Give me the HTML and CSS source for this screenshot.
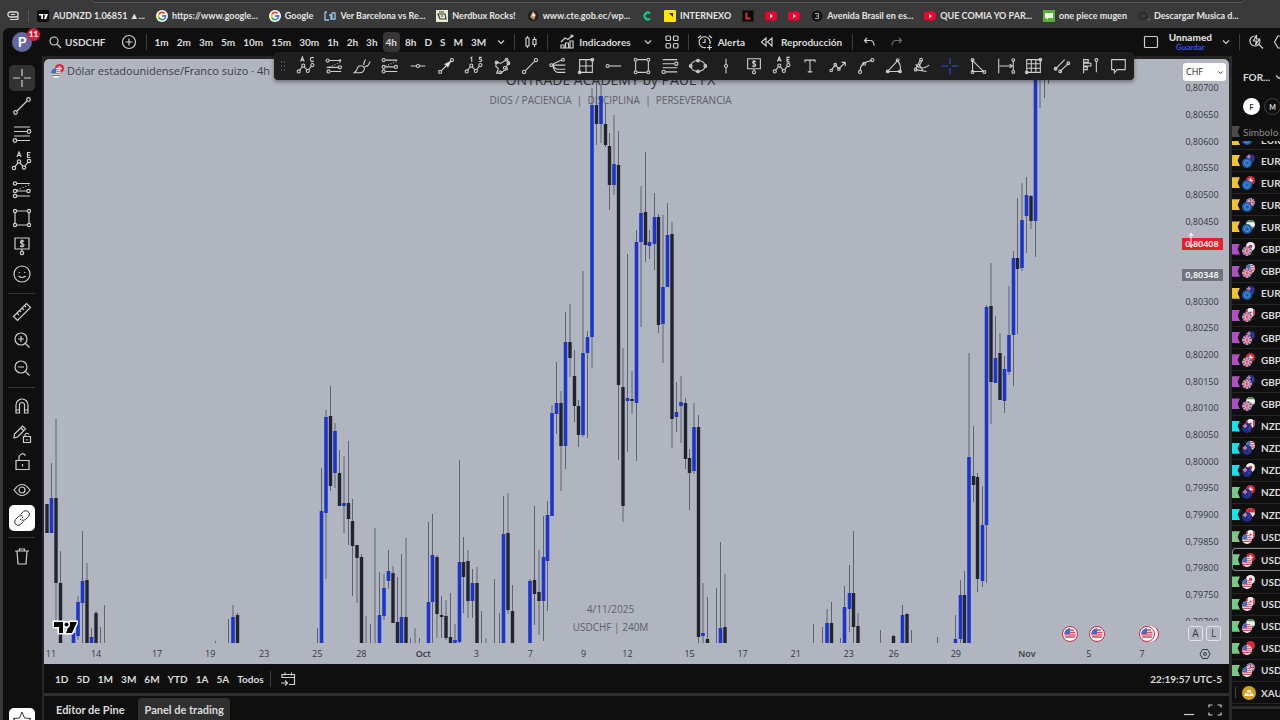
FILE: index.html
```html
<!DOCTYPE html>
<html lang="es">
<head>
<meta charset="utf-8">
<title>USDCHF</title>
<link rel="stylesheet" href="styles.css">
</head>
<body>
<svg class="defs" aria-hidden="true">
  <defs>
    <symbol id="cross" viewBox="0 0 22 22"><path d="M11 2v7M11 13v7M2 11h7M13 11h7"/></symbol>
    <symbol id="trend" viewBox="0 0 22 22"><circle cx="4.500" cy="17.500" r="1.800"/><circle cx="17.500" cy="4.500" r="1.800"/><path d="M6 16 16 6"/></symbol>
    <symbol id="fib" viewBox="0 0 22 22"><path d="M3 4h16M3 8.500h13M3 13h16M6 17.500h13"/><circle cx="18" cy="8.500" r="1.800"/><circle cx="4" cy="17.500" r="1.800"/></symbol>
    <symbol id="zig" viewBox="0 0 22 22"><circle cx="3" cy="17" r="1.700"/><circle cx="8" cy="10.500" r="1.700"/><circle cx="13" cy="16.500" r="1.700"/><circle cx="18" cy="10" r="1.700"/><path d="m4 15.600 3-3.800M9 12l3 3.300M14 15l3-3.800"/></symbol>
    <symbol id="ae" viewBox="0 0 22 22"><use href="#zig"/><path d="m6 6 2-5 2 5M6.700 4.500h2.600M19.500 1.500h-3v5h3M16.500 4h2.500"/></symbol>
    <symbol id="ac" viewBox="0 0 22 22"><use href="#zig"/><path d="m5 6 2-5 2 5M5.700 4.500h2.600M19.500 2.500q-1-1.500-2.500-.8t-1 2.500 1.300 2 2.200-1"/></symbol>
    <symbol id="elliott" viewBox="0 0 22 22"><use href="#zig"/><path d="m7 2.500 1.500-1v5M19.500 1.500h-2.500v2q2.500-.5 2.500 1.200t-2.800 1.300"/></symbol>
    <symbol id="channel" viewBox="0 0 22 22"><circle cx="4" cy="5" r="1.700"/><path d="M6 5h13M3 12.500h13M7 17h12"/><circle cx="17.500" cy="12.500" r="1.700"/><circle cx="5" cy="17" r="1.700"/><circle cx="17.500" cy="5" r=".8"/><path stroke-dasharray="1 2" d="m6 12 12-5"/></symbol>
    <symbol id="channel2" viewBox="0 0 22 22"><circle cx="4" cy="4.500" r="1.700"/><circle cx="4" cy="12" r="1.700"/><circle cx="4" cy="17" r="1.700"/><circle cx="17.500" cy="12" r="1.700"/><path d="M6 4.500h13M6 12h9.800M6 17h13"/><path stroke-dasharray="1 2" d="m6 11 12-5"/></symbol>
    <symbol id="rect" viewBox="0 0 22 22"><path d="M6 4h10M6 18h10M4 6v10M18 6v10"/><circle cx="4" cy="4" r="1.600"/><circle cx="18" cy="4" r="1.600"/><circle cx="4" cy="18" r="1.600"/><circle cx="18" cy="18" r="1.600"/></symbol>
    <symbol id="price" viewBox="0 0 22 22"><path d="M4 3h14v11H4zM11 14v2M13 6.500q-1-1-2.200-.9t-1.300 1.400 1.700 1.500 1.800 1.600-1.600 1.500-2.400-1M11 4.500v8"/><circle cx="11" cy="18" r="1.700"/></symbol>
    <symbol id="smile" viewBox="0 0 22 22"><circle cx="11" cy="11" r="8"/><path d="M8.300 9v1M13.700 9v1M7.500 13q3.500 3 7 0"/></symbol>
    <symbol id="ruler" viewBox="0 0 22 22"><path d="M2.500 15.500 15.500 2.500l4 4-13 13zM6 12l2 2M8.500 9.500l1.500 1.500M11 7l2 2M13.500 4.500l1.500 1.500"/></symbol>
    <symbol id="zin" viewBox="0 0 22 22"><circle cx="10" cy="10" r="6"/><path d="m14.500 14.500 4 4M7 10h6M10 7v6"/></symbol>
    <symbol id="zout" viewBox="0 0 22 22"><circle cx="10" cy="10" r="6"/><path d="m14.500 14.500 4 4M7 10h6"/></symbol>
    <symbol id="magnet" viewBox="0 0 22 22"><path d="M5 18v-8a6 6 0 0 1 12 0v8h-3.500v-8a2.500 2.500 0 0 0-5 0v8zM5 15h3.500M13.500 15h3.500"/></symbol>
    <symbol id="penlock" viewBox="0 0 22 22"><path d="m3 15 .5-4 8-8 3 3-8 8zM10 5l3 3M12.500 13.500h7v6h-7zM14 13.500v-2q2-2.500 4 0M16 16v1.500"/></symbol>
    <symbol id="lock" viewBox="0 0 22 22"><path d="M5 9.500h13v9H5zM8 9.500v-4q3-5 6.500-1M11.500 13v2.500"/></symbol>
    <symbol id="eye" viewBox="0 0 22 22"><path d="M3 11q8-11 16 0-8 11-16 0z"/><circle cx="11" cy="11" r="3"/></symbol>
    <symbol id="link" viewBox="0 0 22 22"><path d="m9.500 7.500 3-3q2.500-2 4.800.2t.2 4.800l-3 3q-2 1.500-4 .5M12.500 14.500l-3 3q-2.500 2-4.800-.2t-.2-4.800l3-3q2-1.500 4-.5"/><path d="m9 13 4-4" stroke-dasharray="1.500 1.500"/></symbol>
    <symbol id="trash" viewBox="0 0 22 22"><path d="M4 6h14M8.500 6V4h5v2M6 6l1 13h8l1-13"/></symbol>
    <symbol id="star" viewBox="0 0 22 22"><path d="m11 2 2.500 6 6.500.5-5 4.200 1.500 6.300-5.500-3.400L5.500 19 7 12.700 2 8.500 8.500 8z"/></symbol>
    <symbol id="brush" viewBox="0 0 22 22"><path d="M2.500 18.500q3-2 3.500-5.500 1.500-3 5-2t2.500 4q-1 3-4.500 3.500zM13 10q0-4 2-6M14 11.500q3 0 4-1.500l2-4"/></symbol>
    <symbol id="hline" viewBox="0 0 22 22"><path d="M3 11h6M13 11h6"/><circle cx="11" cy="11" r="1.700"/></symbol>
    <symbol id="arrow" viewBox="0 0 22 22"><circle cx="4.500" cy="17.500" r="1.700"/><circle cx="17.500" cy="4.500" r="1.700"/><path d="m6 16 5-5"/><path class="fill" d="m10 9 6-3-3 6z"/></symbol>
    <symbol id="poly" viewBox="0 0 22 22"><path d="m5 7 5 1 6-4 3 3-3 4 1 4-4 1-3 3-5 0 2-5-3-3z"/><circle cx="5" cy="7" r="1.500"/><circle cx="16" cy="4" r="1.500"/><circle cx="18" cy="8" r="1.500"/><circle cx="14" cy="13" r="1.500"/><circle cx="9" cy="18" r="1.500"/></symbol>
    <symbol id="fan" viewBox="0 0 22 22"><path d="M5 9 15 4.500M5 10q2 8 6 8h8M5 10q3 4.500 6 4.500h8M5 10h14"/><circle cx="3.500" cy="10" r="1.500"/><circle cx="16.500" cy="4" r="1.500"/></symbol>
    <symbol id="gann" viewBox="0 0 22 22"><path d="M4 4h14v14H4zM11 4v14M4 11h14"/><circle cx="4" cy="18" r="1.500"/><circle cx="18" cy="4" r="1.500"/></symbol>
    <symbol id="ray" viewBox="0 0 22 22"><path d="M6 11h13"/><circle cx="4" cy="11" r="1.700"/></symbol>
    <symbol id="ellipse" viewBox="0 0 22 22"><ellipse cx="11" cy="11" rx="8" ry="6"/><circle cx="3" cy="11" r="1.500"/><circle cx="19" cy="11" r="1.500"/><circle cx="11" cy="5" r="1.500"/><circle cx="11" cy="17" r="1.500"/></symbol>
    <symbol id="vline" viewBox="0 0 22 22"><path d="M11 3v6M11 13v6"/><circle cx="11" cy="11" r="1.700"/></symbol>
    <symbol id="tee" viewBox="0 0 22 22"><path d="M5.500 7V4.500h11V7M11 4.500v13M8.500 17.500h5"/></symbol>
    <symbol id="path" viewBox="0 0 22 22"><path d="m4 15 4-5 4 4 7-7M15 7h4v4"/><circle cx="3.500" cy="16" r="1.400"/><circle cx="8" cy="9.500" r="1.400"/><circle cx="12" cy="14.500" r="1.400"/></symbol>
    <symbol id="curve" viewBox="0 0 22 22"><path d="M4.500 16q0-9 13-11"/><circle cx="4.500" cy="17.500" r="1.700"/><circle cx="9" cy="8.500" r="1.700"/><circle cx="18" cy="4.500" r="1.700"/></symbol>
    <symbol id="sector" viewBox="0 0 22 22"><path d="M4 17 15 5q4 5 3 12z"/><circle cx="4" cy="17" r="1.500"/><circle cx="15" cy="4.500" r="1.500"/><circle cx="17.500" cy="17" r="1.500"/></symbol>
    <symbol id="pitch" viewBox="0 0 22 22"><path d="m4 14 5-9M4 15l12 2M4 9q5 8 15 1M7 8l5 8M11 5l-4 8"/><circle cx="4" cy="15" r="1.500"/><circle cx="10" cy="4" r="1.500"/></symbol>
    <symbol id="tri" viewBox="0 0 22 22"><path d="M5 5v12h12z"/><circle cx="5" cy="4.500" r="1.600"/><circle cx="5" cy="17.500" r="1.600"/><circle cx="18" cy="17.500" r="1.600"/></symbol>
    <symbol id="range" viewBox="0 0 22 22"><path d="M3 3v16M19 6v10M4 11h14"/><path d="m15 9 3 2-3 2"/><circle cx="19" cy="4.500" r="1.500"/><circle cx="19" cy="17.500" r="1.500"/></symbol>
    <symbol id="grid" viewBox="0 0 22 22"><path d="M3 4h15v14H3zM3 8.500h15M3 13.500h15M8 4v14M13 4v14"/><circle cx="3" cy="18" r="1.500"/><circle cx="18" cy="4" r="1.500"/></symbol>
    <symbol id="parallel" viewBox="0 0 22 22"><path d="M3 15 14 4M9 17l9-9"/><circle cx="4" cy="14" r="1.500"/><circle cx="9" cy="17" r="1.500"/><circle cx="18" cy="8" r="1.500"/></symbol>
    <symbol id="profile" viewBox="0 0 22 22"><path d="M4 3v16M4 4h5v3H4M4 8h8v3H4M4 12h4v3H4M18 6v12"/><circle cx="18" cy="4.500" r="1.600"/></symbol>
    <symbol id="comment" viewBox="0 0 22 22"><path d="M4 4h15v11h-9l-3 3.500V15H4z"/></symbol>
    <symbol id="chev" viewBox="0 0 10 10"><path d="m2 3.500 3 3 3-3"/></symbol>
    <symbol id="flag-us" viewBox="0 0 12 12"><circle cx="6" cy="6" r="6" fill="#f3f3f6"/><path d="M1 9h10M.3 6.800h11.400M6 4.500h5.600M6 2h4" stroke="#d8475a" stroke-width="1.300"/><path d="M6 0v6H0a6 6 0 0 1 6-6z" fill="#3f6fc0"/></symbol>
    <symbol id="flag-eu" viewBox="0 0 12 12"><circle cx="6" cy="6" r="6" fill="#1d5fb4"/><circle cx="6" cy="6" r="3" fill="none" stroke="#7fb4c8" stroke-width=".8"/></symbol>
    <symbol id="flag-gb" viewBox="0 0 12 12"><circle cx="6" cy="6" r="6" fill="#5c5f9e"/><path d="m2 2 8 8M10 2 2 10" stroke="#e9b9c6" stroke-width="1.400"/><path d="M6 0v12M0 6h12" stroke="#f4dde2" stroke-width="2.600"/><path d="M6 0v12M0 6h12" stroke="#d5405a" stroke-width="1.400"/></symbol>
    <symbol id="flag-nz" viewBox="0 0 12 12"><circle cx="6" cy="6" r="6" fill="#20308a"/><path d="M1 3.500h5M4 1v5" stroke="#e8d5e0" stroke-width="1.600"/><path d="M1 3.500h5M4 1v5" stroke="#d8314f" stroke-width=".7"/><path d="M8 7h1M9 4h1" stroke="#e66" /></symbol>
    <symbol id="flag-ca" viewBox="0 0 12 12"><circle cx="6" cy="6" r="6" fill="#f6f0f1"/><path d="M2.500 1.200a6 6 0 0 0 0 9.600zM9.500 1.200a6 6 0 0 1 0 9.600z" fill="#d8273f"/><circle cx="6" cy="6" r="1.500" fill="#d8273f"/></symbol>
    <symbol id="flag-ch" viewBox="0 0 12 12"><circle cx="6" cy="6" r="6" fill="#d8273f"/><path d="M6 3v6M3 6h6" stroke="#fff" stroke-width="2"/></symbol>
    <symbol id="flag-jp" viewBox="0 0 12 12"><circle cx="6" cy="6" r="6" fill="#f6f0f1"/><circle cx="6" cy="6" r="2.400" fill="#d8273f"/></symbol>
    <symbol id="flag-hu" viewBox="0 0 12 12"><circle cx="6" cy="6" r="6" fill="#f0f3ee"/><path d="M.8 3a6 6 0 0 1 10.400 0z" fill="#4d8c5d"/><path d="M.8 9a6 6 0 0 0 10.400 0z" fill="#4d8c5d"/></symbol>
    <symbol id="flag-cn" viewBox="0 0 12 12"><circle cx="6" cy="6" r="6" fill="#d8273f"/></symbol>
    <symbol id="flag-sg" viewBox="0 0 12 12"><circle cx="6" cy="6" r="6" fill="#f6f0f1"/><path d="M0 6a6 6 0 0 1 12 0z" fill="#d8273f"/></symbol>
    <symbol id="gicon" viewBox="0 0 12 12"><circle cx="6" cy="6" r="6" fill="#fff"/><g fill="none" stroke-width="1.800"><path d="M8.600 3.300A3.600 3.600 0 0 0 3 4.200" stroke="#e94335"/><path d="M3 4.200a3.600 3.600 0 0 0 0 3.600" stroke="#fbbc05"/><path d="M3 7.800a3.600 3.600 0 0 0 5.300 1.100" stroke="#34a853"/><path d="M8.300 8.900A3.600 3.600 0 0 0 9.600 6H6" stroke="#4285f4"/></g></symbol>
    <symbol id="yt" viewBox="0 0 12 12"><rect y="1.500" width="12" height="9" rx="2.500" fill="#f00033"/><path d="m5 4 3 2-3 2z" fill="#fff"/></symbol>
  </defs>
</svg>

<nav class="bookmarks" aria-label="Marcadores">
  <div class="omnibox"></div>
  <svg class="fav" viewBox="0 0 12 12"><rect x="1" y="2" width="10" height="5" rx="2" fill="none" stroke="#ddd" stroke-width="1.300"/><path d="M3 9.500h8M11 7v2.500M4 4.500h4" stroke="#ddd" stroke-width="1.200"/></svg>
  <i class="bsep"></i>
  <a href="#"><svg class="fav" viewBox="0 0 12 12"><rect width="12" height="12" rx="2" fill="#0b0b0b"/><path d="M2 4h4v5H4.300V5.600H2zM8.500 4H11L9.200 9H7z" fill="#fff"/><circle cx="7.200" cy="4.800" r=".8" fill="#fff"/></svg>AUDNZD 1.06851 ▲...</a>
  <a href="#"><svg class="fav"><use href="#gicon"/></svg>https://www.google...</a>
  <a href="#"><svg class="fav"><use href="#gicon"/></svg>Google</a>
  <a href="#"><svg class="fav" viewBox="0 0 12 12"><path d="M1 2h2M1 2v8h4M5 5h2v5M8 2v8M9 3h2v6H9" fill="none" stroke="#9bc4ef" stroke-width="1.300"/></svg>Ver Barcelona vs Re...</a>
  <a href="#"><svg class="fav" viewBox="0 0 12 12"><rect width="12" height="12" fill="#e9ead2"/><path d="M2 4h7l1 5H4zM3 2h5M5 6h2" fill="none" stroke="#39402b" stroke-width="1.200"/></svg>Nerdbux Rocks!</a>
  <a href="#"><svg class="fav" viewBox="0 0 12 12"><circle cx="6" cy="6" r="5.500" fill="#25211e"/><path d="m6 1 3 4-2 5-4-3z" fill="#b89a70"/><circle cx="6.500" cy="5" r="1.500" fill="#ece6dd"/></svg>www.cte.gob.ec/wp...</a>
  <a href="#" aria-label="C"><svg class="fav" viewBox="0 0 12 12"><path d="M9 3.500a3.300 3.300 0 1 0 0 5" fill="none" stroke="#10c896" stroke-width="2.200"/></svg></a>
  <a href="#"><svg class="fav" viewBox="0 0 12 12"><rect width="12" height="12" rx="1" fill="#ffe600"/><path d="M5 3h4v4L7.500 5.500z" fill="#222"/></svg>INTERNEXO</a>
  <a href="#" aria-label="L"><svg class="fav" viewBox="0 0 12 12"><rect x=".5" y=".5" width="11" height="11" fill="#090909"/><path d="M4.500 2.500v6h4" fill="none" stroke="#e22a3d" stroke-width="2"/></svg></a>
  <a href="#" aria-label="YouTube"><svg class="fav"><use href="#yt"/></svg></a>
  <a href="#" aria-label="YouTube"><svg class="fav"><use href="#yt"/></svg></a>
  <a href="#"><svg class="fav" viewBox="0 0 12 12"><circle cx="6" cy="6" r="5.500" fill="#111"/><path d="M4 3.500h3.500v5H4M5 6h2" fill="none" stroke="#aaa"/></svg>Avenida Brasil en es...</a>
  <a href="#"><svg class="fav"><use href="#yt"/></svg>QUE COMIA YO PAR...</a>
  <a href="#"><svg class="fav" viewBox="0 0 12 12"><rect width="12" height="12" fill="#59ae3b"/><path d="M2 3h8v5H5v2L3 8H2z" fill="#e6f4dd"/></svg>one piece mugen</a>
  <a href="#"><svg class="fav" viewBox="0 0 12 12"><circle cx="5" cy="6" r="3.500" fill="none" stroke="#252525" stroke-width="1.500"/><path d="M11 9v1" stroke="#bbb"/></svg>Descargar Musica d...</a>
</nav>

<div class="app">
  <header class="topbar">
    <button class="avatar" aria-label="Perfil">P<span class="count">11</span></button>
    <button class="symbol"><svg class="ic s14" viewBox="0 0 14 14"><circle cx="6" cy="6" r="4"/><path d="m9 9 4 4"/></svg>USDCHF</button>
    <button class="plus" aria-label="Comparar"><svg class="ic s16" viewBox="0 0 16 16"><circle cx="8" cy="8" r="6.500"/><path d="M8 4.500v7M4.500 8h7"/></svg></button>
    <i class="sep"></i>
    <div class="frames">
      <button>1m</button><button>2m</button><button>3m</button><button>5m</button><button>10m</button><button>15m</button><button>30m</button><button>1h</button><button>2h</button><button>3h</button><button class="on">4h</button><button>8h</button><button>D</button><button>S</button><button>M</button><button>3M</button>
      <button class="more" aria-label="Más"><svg class="ic s10"><use href="#chev"/></svg></button>
    </div>
    <i class="sep"></i>
    <button class="candletype" aria-label="Velas"><svg class="ic s16" viewBox="0 0 16 16"><path d="M3 4h3v8H3zM4.500 2v2M4.500 12v2M10 5.500h3v5h-3zM11.500 3v2.500M11.500 10.500V13"/></svg></button>
    <i class="sep"></i>
    <button class="ind"><svg class="ic s16" viewBox="0 0 16 16"><path d="M2 14v-3h3v3zM6.500 14V9h3v5zM11 14V7h3v7zM2 14h12M2 8l4-4 3 1.500L13 2"/><circle cx="13" cy="2" r="1"/></svg>Indicadores</button>
    <button class="chevbtn" aria-label="Favoritos"><svg class="ic s10"><use href="#chev"/></svg></button>
    <button aria-label="Plantillas"><svg class="ic s16" viewBox="0 0 16 16"><rect x="2" y="2" width="4.500" height="4.500" rx="1"/><rect x="9.500" y="2" width="4.500" height="4.500" rx="1"/><rect x="2" y="9.500" width="4.500" height="4.500" rx="1"/><rect x="9.500" y="9.500" width="4.500" height="4.500" rx="1"/></svg></button>
    <i class="sep"></i>
    <button class="alert"><svg class="ic s16" viewBox="0 0 16 16"><path d="M12.800 10A5.500 5.500 0 1 0 9 13.500M8 5v3.500H5.500M1 4l3-2.500M12 1.500 15 4M12.500 11v5M10 13.500h5"/></svg>Alerta</button>
    <button class="replay"><svg class="ic s16" viewBox="0 0 16 16"><path d="M7 4v8L2.500 8zM13 4v8L8.500 8z"/></svg>Reproducción</button>
    <i class="sep undosep"></i>
    <button class="undo" aria-label="Deshacer"><svg class="ic s12" viewBox="0 0 12 12"><path d="M4 2 1.500 4.500 4 7M2 4.500h5q4 0 4 5"/></svg></button>
    <button class="redo" aria-label="Rehacer"><svg class="ic s12" viewBox="0 0 12 12"><path d="m8 2 2.500 2.500L8 7M10 4.500H5q-4 0-4 5"/></svg></button>
    <span class="grow"></span>
    <button aria-label="Diseño"><svg class="ic s16" viewBox="0 0 16 16"><rect x="1.500" y="2.500" width="13" height="11" rx="1"/></svg></button>
    <button class="layout"><b>Unnamed</b><span>Guardar</span></button>
    <button class="chevbtn2" aria-label="Menú"><svg class="ic s10"><use href="#chev"/></svg></button>
    <i class="sep"></i>
    <button class="quick" aria-label="Búsqueda rápida"><svg class="ic s16" viewBox="0 0 16 16"><path d="M11.500 5a5 5 0 1 1-5-3M11 10.500l4 4M8.500 1 5.500 7h3l-1 4 4-6h-3z"/></svg></button>
    <button class="gear" aria-label="Ajustes"><svg class="ic s16" viewBox="0 0 16 16"><path d="m5 2-3.500 6L5 14h6l3.500-6L11 2z"/></svg></button>
  </header>

  <div class="work">
    <aside class="rail">
      <button class="sel" aria-label="Cruz"><svg class="ic"><use href="#cross"/></svg></button>
      <button aria-label="Tendencia"><svg class="ic"><use href="#trend"/></svg></button>
      <button aria-label="Fibonacci"><svg class="ic"><use href="#fib"/></svg></button>
      <button aria-label="Patrones"><svg class="ic"><use href="#ae"/></svg></button>
      <button aria-label="Previsión"><svg class="ic"><use href="#channel2"/></svg></button>
      <button aria-label="Formas"><svg class="ic"><use href="#rect"/></svg></button>
      <button aria-label="Anotación"><svg class="ic"><use href="#price"/></svg></button>
      <button aria-label="Iconos"><svg class="ic"><use href="#smile"/></svg></button>
      <hr>
      <button aria-label="Medir"><svg class="ic"><use href="#ruler"/></svg></button>
      <button aria-label="Acercar"><svg class="ic"><use href="#zin"/></svg></button>
      <button aria-label="Alejar"><svg class="ic"><use href="#zout"/></svg></button>
      <hr>
      <button aria-label="Imán"><svg class="ic"><use href="#magnet"/></svg></button>
      <button aria-label="Modo dibujo"><svg class="ic"><use href="#penlock"/></svg></button>
      <button aria-label="Bloquear"><svg class="ic"><use href="#lock"/></svg></button>
      <button aria-label="Ocultar"><svg class="ic"><use href="#eye"/></svg></button>
      <button class="white" aria-label="Sincronizar"><svg class="ic"><use href="#link"/></svg></button>
      <hr>
      <button aria-label="Eliminar"><svg class="ic"><use href="#trash"/></svg></button>
      <button class="white fav-tools" aria-label="Favoritos"><svg class="ic"><use href="#star"/></svg></button>
    </aside>

    <main class="center">
      <section class="chart">
        <div class="plot">
          <div class="marks">
            <p class="title">ONTRADE ACADEMY by PAUL FX</p>
            <p class="motto">DIOS / PACIENCIA &nbsp;|&nbsp; DISCIPLINA &nbsp;|&nbsp; PERSEVERANCIA</p>
            <p class="date">4/11/2025</p>
            <p class="pair">USDCHF | 240M</p>
          </div>
          <svg class="candles" viewBox="44 59 1133 584" preserveAspectRatio="none">
            <path class="wick" d="M51.500 463V533M56 419V620M60.500 551V643M78 596V640M82.500 531V643M87 563V643M91.500 628V643M96 611V643M100.500 627V643M104.500 605V643M215.500 641V643M228.500 619V643M233 605V643M237.500 613V643M317.500 628V643M321.500 468V643M326 410V579M330.500 386V491M335 423V488M339.500 450V506M344 456V533M348.500 441V545M352.500 499V596M357 545V603M361.500 554V643M366 616V643M370.500 624V643M375 528V643M379.500 572V643M384 574V620M388.500 550V589M393 566V623M397.500 577V643M401.500 554V643M406 538V643M410.500 638V643M415 628V643M419.500 638V643M428.500 522V643M432.500 514V643M437 555V638M441.500 596V638M446 600V640M450.500 593V643M455 624V643M459.500 460V643M463.500 537V613M468 550V618M472.500 569V618M477 567V643M481.500 611V643M486 638V643M494.500 579V643M499.500 613V643M503.500 496V643M508 493V614M512.500 585V643M530 579V643M534.500 506V625M539 550V635M543.500 516V641M547.500 501V611M552 405V516M556.500 362V434M561 391V491M565.500 312V469M570 304V377M574.500 350V422M578.500 400V447M583 271V437M587.500 331V438M592 88V368M596.500 82V145M601 84V143M605.500 103V147M609.500 133V210M614 115V195M618.500 131V460M623 348V522M627.500 254V452M632 371V414M636.500 230V461M641 186V327M645.500 152V262M649.500 230V259M654.500 193V270M658.500 214V333M663 215V363M667.500 203V287M672 222V448M676.500 382V432M681 376V443M685.500 398V469M689.500 449V510M694 403V474M698.500 415V643M703 583V643M707.500 597V643M716.500 588V643M720.500 542V643M725 574V643M813.500 624V643M822.500 627V643M827 609V643M831.500 602V643M840.500 638V643M844.500 586V643M849.500 565V632M853.500 531V643M858 613V643M880.500 630V643M893.500 635V643M902.500 605V643M907 613V643M911.500 630V643M937.500 637V643M955.500 615V643M960.500 580V643M964.500 571V643M969 353V643M973.500 426V502M977.500 473V592M982.500 486V587M986.500 305V583M991 263V424M995.500 316V383M1000 333V400M1004.500 356V413M1009 286V375M1013.500 251V386M1017.500 198V334M1022 183V271M1026.500 177V253M1031 195V229M1035.500 59V257M1040 59V108M1044.500 59V98M1048.500 59V84"/>
            <path class="down" d="M47 504V533M56 498V583M60.500 583V643M87 580V643M96 613V643M237.500 615V643M330.500 416V486M339.500 473V506M348.500 503V519M352.500 521V546M357 545V558M361.500 557V643M393 573V623M397.500 622V643M406 617V643M437 557V614M441.500 615V617M446 616V638M450.500 637V643M463.500 562V577M468 561V601M477 583V643M508 533V610M512.500 611V643M534.500 580V594M539 592V601M561 403V446M570 342V358M574.500 376V406M578.500 406V435M596.500 105V124M605.500 124V145M609.500 146V185M618.500 165V385M623 387V506M632 399V401M645.500 212V245M658.500 217V325M672 234V419M685.500 403V459M689.500 458V473M698.500 427V637M707.500 639V643M725 627V643M831.500 623V643M853.500 593V627M858 626V643M893.500 636V643M907 614V643M964.500 595V643M973.500 476V485M977.500 477V579M991 306V382M1000 353V400M1017.500 258V269M1031 196V221"/>
            <path class="up" d="M51.500 498V533M73.500 633V643M78 602V636M82.500 581V603M91.500 637V643M233 617V643M321.500 511V643M326 417V513M335 431V473M344 503V506M379.500 615V643M384 588V616M388.500 571V581M401.500 617V643M428.500 602V643M432.500 555V602M455 640V643M459.500 562V642M472.500 583V601M503.500 534V643M530 581V643M543.500 557V601M547.500 515V561M552 413V516M556.500 403V414M565.500 342V446M583 353V435M587.500 337V353M592 105V337M601 96V124M614 164V185M627.500 398V401M636.500 242V403M641 213V242M649.500 242V246M654.500 217V244M663 287V324M667.500 235V287M676.500 412V417M681 402V406M694 427V471M703 633V636M720.500 628V643M827 623V643M844.500 607V643M849.500 593V609M902.500 615V643M955.500 639V643M960.500 595V639M969 457V643M982.500 525V581M986.500 307V525M995.500 358V383M1004.500 369V401M1009 335V372M1013.500 258V335M1022 220V268M1026.500 195V216M1035.500 59V221"/>
          </svg>
          <div class="legend"><span class="duo"><svg class="back"><use href="#flag-ch"/></svg><svg class="front"><use href="#flag-us"/></svg></span>Dólar estadounidense/Franco suizo · 4h</div>
          <div class="plotfoot">
            <svg class="tv" viewBox="0 0 26 18"><path d="M2 3h9v11H7V8H2zM18 3h7l-5 11h-6z" class="tvshape"/><circle cx="14.500" cy="5.500" r="2" class="tvshape"/></svg>
            <div class="events"><svg class="ev"><use href="#flag-us"/></svg><svg class="ev"><use href="#flag-us"/></svg><svg class="ev last"><use href="#flag-us"/></svg></div>
          </div>
        </div>
        <div class="prices">
          <div class="cur"><select aria-label="Divisa"><option>CHF</option></select><svg class="ic"><use href="#chev"/></svg></div>
          <div class="scale"><div class="ticks">
            <span>0,80700</span><span>0,80650</span><span>0,80600</span><span>0,80550</span><span>0,80500</span><span>0,80450</span>
            <span class="raised"><b class="red">0,80408<svg class="cursor" viewBox="0 0 8 16"><path d="M4 1v14M2 4l2-3 2 3M2 12l2 3 2-3"/></svg></b></span><span><b class="gray">0,80348</b></span>
            <span>0,80300</span><span>0,80250</span><span>0,80200</span><span>0,80150</span><span>0,80100</span><span>0,80050</span><span>0,80000</span><span>0,79950</span><span>0,79900</span><span>0,79850</span><span>0,79800</span><span>0,79750</span><span>0,79700</span>
          </div></div>
          <div class="modes"><button>A</button><button>L</button></div>
        </div>
        <div class="times">
          <i></i><span>11</span><span>14</span><span>17</span><span>19</span><span>23</span><span>25</span><span>28</span><span class="mon">Oct</span><span>3</span><span>7</span><span>9</span><span>12</span><span>15</span><span>17</span><span>21</span><span>23</span><span>26</span><span>29</span><span class="mon">Nov</span><span>5</span><span>7</span>
        </div>
        <button class="axisgear" aria-label="Ajustes de escala"><svg class="ic s12" viewBox="0 0 12 12"><path d="M3.500 1.500 1 6l2.500 4.500h5L11 6 8.500 1.500z"/><circle cx="6" cy="6" r="1.500"/></svg></button>
      </section>
      <div class="ranges">
        <button>1D</button><button>5D</button><button>1M</button><button>3M</button><button>6M</button><button>YTD</button><button>1A</button><button>5A</button><button>Todos</button>
        <i class="sep"></i>
        <button aria-label="Ir a fecha"><svg class="ic s16" viewBox="0 0 16 16"><path d="M2 7V3.500h12.500v10H9M2 6.500h12.500M5 1.500v3M11.500 1.500v3M1 12h6M5 9.500 7.500 12 5 14.500"/></svg></button>
        <time>22:19:57 UTC-5</time>
      </div>
      <div class="tabs">
        <button>Editor de Pine</button><button class="on">Panel de trading</button>
        <span class="grow"></span>
        <button class="win" aria-label="Minimizar"><svg class="ic s14" viewBox="0 0 14 14"><path d="M2 11.500h10"/></svg></button>
        <button class="win" aria-label="Maximizar"><svg class="ic s14" viewBox="0 0 14 14"><path d="M1 4.500V2h3.500M9.500 2H13v2.500M13 9.500V12H9.500M4.500 12H1V9.500"/></svg></button>
      </div>
    </main>

    <aside class="watch">
      <h2>FOR... <svg class="ic s10"><use href="#chev"/></svg></h2>
      <div class="lists"><button class="f">F</button><button class="m">M</button></div>
      <div class="colhead"><i class="flag"></i>Símbolo</div>
      <ul>
        <li class="cut y"><i class="flag"></i><span class="duo"><svg class="back"><use href="#flag-ca"/></svg><svg class="front"><use href="#flag-eu"/></svg></span>EUR</li>
        <li class="y"><i class="flag"></i><span class="duo"><svg class="back"><use href="#flag-nz"/></svg><svg class="front"><use href="#flag-eu"/></svg></span>EUR</li>
        <li class="y"><i class="flag"></i><span class="duo"><svg class="back"><use href="#flag-ch"/></svg><svg class="front"><use href="#flag-eu"/></svg></span>EUR</li>
        <li class="y"><i class="flag"></i><span class="duo"><svg class="back"><use href="#flag-gb"/></svg><svg class="front"><use href="#flag-eu"/></svg></span>EUR</li>
        <li class="y"><i class="flag"></i><span class="duo"><svg class="back"><use href="#flag-hu"/></svg><svg class="front"><use href="#flag-eu"/></svg></span>EUR</li>
        <li class="p"><i class="flag"></i><span class="duo"><svg class="back"><use href="#flag-jp"/></svg><svg class="front"><use href="#flag-gb"/></svg></span>GBP</li>
        <li class="p"><i class="flag"></i><span class="duo"><svg class="back"><use href="#flag-us"/></svg><svg class="front"><use href="#flag-gb"/></svg></span>GBP</li>
        <li class="y"><i class="flag"></i><span class="duo"><svg class="back"><use href="#flag-nz"/></svg><svg class="front"><use href="#flag-eu"/></svg></span>EUR</li>
        <li class="p"><i class="flag"></i><span class="duo"><svg class="back"><use href="#flag-ca"/></svg><svg class="front"><use href="#flag-gb"/></svg></span>GBP</li>
        <li class="p"><i class="flag"></i><span class="duo"><svg class="back"><use href="#flag-nz"/></svg><svg class="front"><use href="#flag-gb"/></svg></span>GBP</li>
        <li class="p"><i class="flag"></i><span class="duo"><svg class="back"><use href="#flag-ch"/></svg><svg class="front"><use href="#flag-gb"/></svg></span>GBP</li>
        <li class="p"><i class="flag"></i><span class="duo"><svg class="back"><use href="#flag-nz"/></svg><svg class="front"><use href="#flag-gb"/></svg></span>GBP</li>
        <li class="p"><i class="flag"></i><span class="duo"><svg class="back"><use href="#flag-hu"/></svg><svg class="front"><use href="#flag-gb"/></svg></span>GBP</li>
        <li class="c"><i class="flag"></i><span class="duo"><svg class="back"><use href="#flag-ca"/></svg><svg class="front"><use href="#flag-nz"/></svg></span>NZD</li>
        <li class="c"><i class="flag"></i><span class="duo"><svg class="back"><use href="#flag-us"/></svg><svg class="front"><use href="#flag-nz"/></svg></span>NZD</li>
        <li class="c"><i class="flag"></i><span class="duo"><svg class="back"><use href="#flag-jp"/></svg><svg class="front"><use href="#flag-nz"/></svg></span>NZD</li>
        <li class="g"><i class="flag"></i><span class="duo"><svg class="back"><use href="#flag-ch"/></svg><svg class="front"><use href="#flag-nz"/></svg></span>NZD</li>
        <li class="c"><i class="flag"></i><span class="duo"><svg class="back"><use href="#flag-sg"/></svg><svg class="front"><use href="#flag-nz"/></svg></span>NZD</li>
        <li class="g"><i class="flag"></i><span class="duo"><svg class="back"><use href="#flag-ca"/></svg><svg class="front"><use href="#flag-us"/></svg></span>USD</li>
        <li class="g cur-row"><i class="flag"></i><span class="duo"><svg class="back"><use href="#flag-ch"/></svg><svg class="front"><use href="#flag-us"/></svg></span>USD</li>
        <li class="g"><i class="flag"></i><span class="duo"><svg class="back"><use href="#flag-jp"/></svg><svg class="front"><use href="#flag-us"/></svg></span>USD</li>
        <li class="g"><i class="flag"></i><span class="duo"><svg class="back"><use href="#flag-ca"/></svg><svg class="front"><use href="#flag-us"/></svg></span>USD</li>
        <li class="g"><i class="flag"></i><span class="duo"><svg class="back"><use href="#flag-hu"/></svg><svg class="front"><use href="#flag-us"/></svg></span>USD</li>
        <li class="g"><i class="flag"></i><span class="duo"><svg class="back"><use href="#flag-cn"/></svg><svg class="front"><use href="#flag-us"/></svg></span>USD</li>
        <li class="g"><i class="flag"></i><span class="duo"><svg class="back"><use href="#flag-gb"/></svg><svg class="front"><use href="#flag-us"/></svg></span>USD</li>
        <li class="gold"><i class="flag"></i><svg class="xau" viewBox="0 0 14 14"><circle cx="7" cy="7" r="7" fill="#d4a01c"/><path d="M5.500 4h3l1 2.500h-5zM3 7.500h3.300L7 10H2.300zM7.700 7.500H11l.7 2.500H7.300z" fill="#fff"/></svg>XAU</li>
      </ul>
      <div class="watchfoot"></div>
    </aside>
  </div>

  <div class="tools" role="toolbar" aria-label="Herramientas de dibujo favoritas">
    <span class="grip"></span>
    <button aria-label="ABC"><svg class="ic"><use href="#ac"/></svg></button>
    <button aria-label="Canal"><svg class="ic"><use href="#channel"/></svg></button>
    <button aria-label="Pincel"><svg class="ic"><use href="#brush"/></svg></button>
    <button aria-label="Posición"><svg class="ic"><use href="#channel2"/></svg></button>
    <button aria-label="Línea horizontal"><svg class="ic"><use href="#hline"/></svg></button>
    <button aria-label="Flecha"><svg class="ic"><use href="#arrow"/></svg></button>
    <button aria-label="Elliott"><svg class="ic"><use href="#elliott"/></svg></button>
    <button aria-label="Polígono"><svg class="ic"><use href="#poly"/></svg></button>
    <button aria-label="Tendencia"><svg class="ic"><use href="#trend"/></svg></button>
    <button aria-label="Abanico"><svg class="ic"><use href="#fan"/></svg></button>
    <button aria-label="Caja de Gann"><svg class="ic"><use href="#gann"/></svg></button>
    <button aria-label="Rayo"><svg class="ic"><use href="#ray"/></svg></button>
    <button aria-label="Rectángulo"><svg class="ic"><use href="#rect"/></svg></button>
    <button aria-label="Fibonacci"><svg class="ic"><use href="#fib"/></svg></button>
    <button aria-label="Elipse"><svg class="ic"><use href="#ellipse"/></svg></button>
    <button aria-label="Línea vertical"><svg class="ic"><use href="#vline"/></svg></button>
    <button aria-label="Precio"><svg class="ic"><use href="#price"/></svg></button>
    <button aria-label="Triángulo ABCDE"><svg class="ic"><use href="#ae"/></svg></button>
    <button aria-label="Texto"><svg class="ic"><use href="#tee"/></svg></button>
    <button aria-label="Ruta"><svg class="ic"><use href="#path"/></svg></button>
    <button aria-label="Curva"><svg class="ic"><use href="#curve"/></svg></button>
    <button aria-label="Arco"><svg class="ic"><use href="#sector"/></svg></button>
    <button aria-label="Círculos"><svg class="ic"><use href="#pitch"/></svg></button>
    <button class="blue" aria-label="Cruz"><svg class="ic"><use href="#cross"/></svg></button>
    <button aria-label="Triángulo"><svg class="ic"><use href="#tri"/></svg></button>
    <button aria-label="Rango de fechas"><svg class="ic"><use href="#range"/></svg></button>
    <button aria-label="Cuadrícula"><svg class="ic"><use href="#grid"/></svg></button>
    <button aria-label="Paralelo"><svg class="ic"><use href="#parallel"/></svg></button>
    <button aria-label="Perfil de volumen"><svg class="ic"><use href="#profile"/></svg></button>
    <button aria-label="Comentario"><svg class="ic"><use href="#comment"/></svg></button>
  </div>
</div>
</body>
</html>
```
FILE: styles.css
```css
* { box-sizing: border-box; }
body {
  margin: 0;
  height: 100vh;
  display: flex;
  flex-direction: column;
  overflow: hidden;
  background: #3a3a3a;
  color: #dbdbdb;
  font: 700 10px/14px Lato, "Open Sans", sans-serif;
}
button {
  display: flex;
  align-items: center;
  justify-content: center;
  padding: 0;
  border: 0;
  background: none;
  color: inherit;
  font: inherit;
  white-space: nowrap;
}
p, h2, ul { margin: 0; padding: 0; }
svg { display: block; flex: none; }
.defs { position: absolute; width: 0; height: 0; }
.ic { width: 22px; height: 22px; fill: none; stroke: #cfcfcf; stroke-width: 1.2; }
.fill { fill: #eee; }
.s10 { width: 10px; height: 10px; }
.s12 { width: 12px; height: 12px; }
.s14 { width: 14px; height: 14px; }
.s16 { width: 16px; height: 16px; }
.grow { flex: 1; }

/* browser bookmarks */
.bookmarks {
  position: relative;
  flex: none;
  height: 28px;
  display: flex;
  align-items: center;
  gap: 11px;
  padding: 4px 7px 0;
  font-size: 9px;
  color: #e4e4e4;
}
.omnibox {
  position: absolute;
  left: 90px;
  right: 34px;
  top: -9px;
  height: 12px;
  border: 1px solid #555;
  border-radius: 8px;
  background: #333;
}
.bookmarks a { display: flex; align-items: center; gap: 4px; color: inherit; text-decoration: none; white-space: nowrap; }
.fav { width: 12px; height: 12px; }
.bsep { width: 1px; height: 12px; margin: 0 -3px 0 -2px; background: #5a5a5a; }

/* application frame */
.app {
  position: relative;
  flex: 1;
  min-height: 0;
  margin-left: 3px;
  display: flex;
  flex-direction: column;
  border-radius: 6px 0 0 0;
  background: #0f0f0f;
}
.topbar { flex: none; height: 28px; display: flex; align-items: center; overflow: hidden; }
.sep { flex: none; width: 1px; height: 16px; background: #3d3d3d; margin: 0 8px; }
.avatar {
  position: relative;
  width: 20px;
  height: 20px;
  margin-left: 9px;
  border-radius: 50%;
  background: #6468a0;
  color: #fff;
  font-size: 14px;
}
.count {
  position: absolute;
  left: 15px;
  top: -4px;
  width: 13px;
  height: 13px;
  border-radius: 50%;
  background: #d91f3f;
  font-size: 8px;
  line-height: 13px;
}
.symbol { gap: 3px; margin-left: 16px; }
.plus { margin: 0 1px 0 15px; }
.frames { display: flex; align-items: center; gap: 8px; }
.frames .on { margin: 0 -3px; padding: 0 3px; height: 20px; border-radius: 4px; background: #363636; }
.frames .more { margin-left: 2px; }
.ind { gap: 4px; margin-left: 3px; }
.chevbtn { margin: 0 11px 0 12px; }
.alert { gap: 5px; }
.replay { gap: 6px; margin-left: 14px; }
.undosep { margin: 0 10px; }
.redo { margin-left: 16px; opacity: .5; }
.layout { flex-direction: column; margin-left: 10px; line-height: 11px; }
.layout span { font-size: 8px; line-height: 9px; color: #3450f0; }
.chevbtn2 { margin-left: 9px; }
.quick { margin-right: 9px; }
.gear { margin-right: -9px; }

.work { flex: 1; min-height: 0; display: flex; }
.rail {
  flex: none;
  width: 41px;
  display: flex;
  flex-direction: column;
  align-items: center;
  padding: 9px 2px 0 0;
  border-right: 2px solid #272727;
  overflow: hidden;
}
.rail button { flex: none; width: 26px; height: 26px; margin-bottom: 2px; border-radius: 5px; }
.rail hr { flex: none; width: 27px; height: 1px; margin: 4px 0 5px; border: 0; background: #373737; }
.rail .sel { background: #333; }
.rail .white { background: #fff; }
.rail .white .ic { stroke: #333; stroke-width: 1; }
.rail .fav-tools { margin-top: auto; margin-bottom: -14px; }

.center { flex: 1; min-width: 0; display: flex; flex-direction: column; border-top: 3px solid #242424; }
.chart {
  flex: 1;
  min-height: 0;
  display: grid;
  grid-template: minmax(0, 1fr) 21px / minmax(0, 1fr) 52px;
  border-radius: 5px 5px 0 0;
  background: #b1b5bf;
  color: #343842;
  font-family: "Open Sans", "Noto Sans", sans-serif;
  font-weight: 400;
  overflow: hidden;
}
.plot { display: grid; min-height: 0; }
.plot > * { grid-area: 1 / 1; min-height: 0; }
.candles { width: 100%; height: 100%; fill: none; }
.wick { stroke: #4b4d62; stroke-width: 1; opacity: .8; }
.down { stroke: #22242e; stroke-width: 3.4; }
.up { stroke: #1d35cc; stroke-width: 3.6; }
.marks { display: flex; flex-direction: column; align-items: center; color: #5b5f69; font-size: 10px; line-height: 18px; }
.title { margin-top: 10px; font-size: 14px; line-height: 22px; color: #33363e; }
.date { margin-top: auto; }
.pair { margin-bottom: 7px; }
.legend { align-self: start; display: flex; align-items: center; gap: 3px; padding: 5px 0 0 7px; font-size: 11px; color: #3c404c; white-space: nowrap; }
.duo { position: relative; flex: none; display: block; width: 13px; height: 14px; }
.back { position: absolute; right: 0; top: 0; width: 9px; height: 9px; }
.front { position: absolute; left: 0; bottom: 0; width: 10px; height: 10px; }
.plotfoot { align-self: end; display: flex; align-items: flex-end; justify-content: space-between; padding: 0 22px 1px 8px; }
.tv { width: 26px; height: 18px; margin-bottom: 5px; }
.tvshape { fill: #050505; stroke: #fff; stroke-width: 3; paint-order: stroke; }
.events { display: flex; gap: 11px; }
.ev { width: 16px; height: 16px; padding: 1px; border: 1px solid #cf2440; border-radius: 50%; background: #fff; }
.ev.last { margin-left: 23px; box-shadow: 3px 0 0 #fff, 4px 0 0 #cf2440; }

.prices { display: flex; flex-direction: column; min-height: 0; padding-top: 4px; font-size: 9px; }
.cur { position: relative; z-index: 1; flex: none; width: 43px; height: 18px; margin-left: 6px; }
.cur select { width: 100%; height: 100%; padding: 0 0 0 3px; border: 0; border-radius: 3px; background: #fff; color: #222; font: inherit; appearance: none; }
.cur .ic { position: absolute; right: 2px; top: 6px; width: 7px; height: 7px; stroke: #222; }
.scale { flex: 1; min-height: 0; margin-top: -6px; overflow: hidden; }
.ticks { height: calc(100% + 14px); display: grid; grid-auto-rows: minmax(0, 1fr); }
.ticks span { display: flex; align-items: center; justify-content: center; padding-right: 2px; }
.ticks b { position: relative; width: 41px; line-height: 12px; text-align: center; font-weight: 600; color: #fff; }
.ticks .raised { padding-bottom: 8px; }
.red { background: #e3202b; }
.gray { background: #71747e; }
.cursor { position: absolute; left: 5px; top: -6px; width: 8px; height: 16px; fill: none; stroke: #fff; }
.modes { flex: none; height: 22px; display: flex; gap: 3px; align-items: center; padding: 2px 0 0 11px; font-size: 10px; }
.modes button { width: 15px; height: 15px; border: 1px solid #e2e4e9; border-radius: 3px; }
.times {
  display: grid;
  grid-template-columns: 7fr 45fr 61fr 53fr 54fr 53fr 44fr 62fr 53fr 54fr 53fr 44fr 62fr 53fr 53fr 53fr 45fr 62fr 71fr 62fr 53fr 35fr;
  align-items: center;
  font-size: 9px;
}
.times span { width: 0; display: flex; justify-content: center; }
.mon { font-weight: 600; }
.axisgear .ic { stroke: #343842; stroke-width: 1; }
.axisgear { padding-left: 3px; }

.ranges { flex: none; height: 29px; display: flex; align-items: center; gap: 8px; padding: 0 7px 0 11px; }
.ranges .sep { margin: 0 1px 0 -2px; }
.ranges time { margin-left: auto; }
.tabs { flex: none; height: 27px; display: flex; align-items: stretch; padding: 2px 7px 0 5px; border-top: 3px solid #303030; font-size: 11px; }
.tabs button { padding: 2px 6px 0 7px; border-radius: 4px 4px 0 0; }
.tabs .on { margin-left: 7px; background: #303030; }
.tabs .win { padding: 2px 0 0; margin-left: 12px; }

/* watchlist */
.watch { flex: none; width: 51px; display: flex; flex-direction: column; border-left: 3px solid #2b2b2b; overflow: hidden; }
.watch h2 { flex: none; display: flex; align-items: center; gap: 4px; height: 42px; padding-left: 11px; font-size: 10px; white-space: nowrap; }
.lists { flex: none; display: flex; gap: 4px; padding-left: 11px; }
.lists button { flex: none; width: 17px; height: 17px; border-radius: 50%; font-size: 7px; }
.lists .f { background: #fff; color: #222; }
.lists .m { border: 1px solid #444; }
.colhead { flex: none; display: flex; align-items: center; gap: 3px; height: 26px; padding-top: 7px; font-weight: 400; color: #8c8c8c; }
.watch ul { flex: 1; min-height: 0; display: flex; flex-direction: column; list-style: none; }
.watch li { flex: 1 1 0; min-height: 0; display: flex; align-items: center; gap: 2px; border-bottom: 1px solid #242424; white-space: nowrap; }
.watch .duo { margin-right: 4px; }
.watch .cut { flex: none; height: 9px; align-items: flex-end; overflow: hidden; padding-bottom: 4px; line-height: 9px; }
.flag { flex: none; width: 8px; height: 11px; background: #4a4a4a; clip-path: polygon(0 0, 100% 0, 70% 50%, 100% 100%, 0 100%); }
.y .flag { background: #f3c32b; }
.p .flag { background: #b04fc4; }
.c .flag { background: #14e3ee; }
.g .flag { background: #79c885; }
.gold .flag { background: linear-gradient(#444, #444) 3px 0 / 1px 11px no-repeat; }
.watch .cur-row { border: 1px solid #8a8a8a; border-right: 0; border-radius: 4px 0 0 4px; }
.cur-row .flag { width: 7px; }
.xau { width: 14px; height: 14px; margin-right: 3px; }
.watchfoot { flex: none; height: 14px; border-top: 3px solid #2b2b2b; margin-top: 2px; }

/* favourite drawing tools */
.tools {
  position: absolute;
  left: 271px;
  top: 24px;
  height: 28px;
  display: flex;
  align-items: center;
  padding-right: 2px;
  border-radius: 4px;
  background: #1e1e1e;
  box-shadow: 0 2px 4px #0006;
}
.tools button { width: 28px; height: 28px; }
.tools .ic { width: 20px; height: 20px; }
.tools .blue .ic { stroke: #2a51e0; }
.grip { width: 6px; height: 12px; margin: 0 6px; background: radial-gradient(circle, #555 1px, transparent 1px) 0 0 / 3px 4px; }
```
